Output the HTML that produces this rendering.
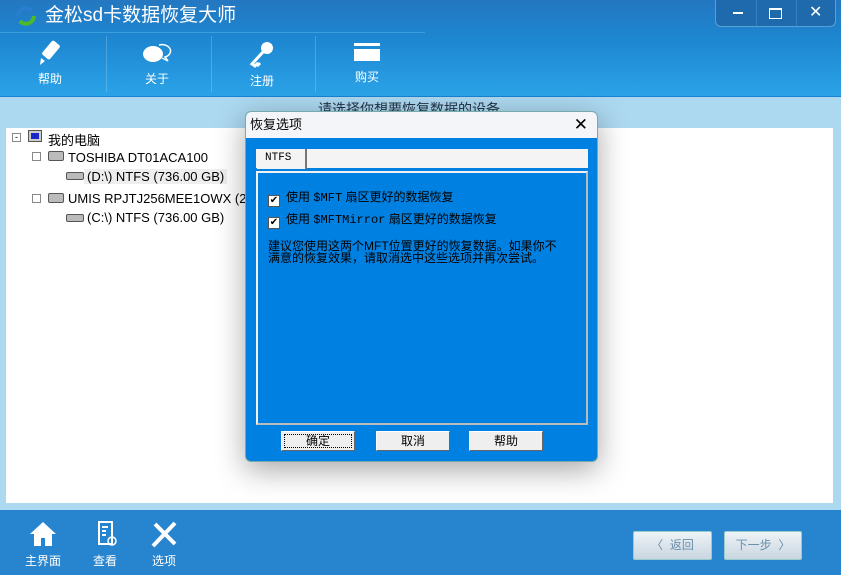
<!DOCTYPE html>
<html><head><meta charset="utf-8"><style>
*{margin:0;padding:0;box-sizing:border-box}
body{width:841px;height:575px;overflow:hidden;position:relative;background:#acd8f0;font-family:"Liberation Sans","Noto Sans CJK SC",sans-serif}
.hdr{position:absolute;left:0;top:0;width:841px;height:97px;background:linear-gradient(#2477c0,#1d86d0 40%,#2ba3e8);border-bottom:1px solid #1a82d0}
.title{position:absolute;left:45px;top:3px;color:#fff;font-size:19px;line-height:26px}
.sep{position:absolute;left:0;top:32px;width:425px;height:1px;background:#3a9ee0}
.wc{position:absolute;left:715px;top:0;width:121px;height:27px;background:#1f6aad;border:1px solid #5aa0d8;border-top:none;border-radius:0 0 6px 6px}
.tb{position:absolute;top:40px;width:60px;text-align:center;color:#fff;font-size:12px}
.tb svg{display:block;margin:0 auto 4px}
.vs{position:absolute;top:36px;width:1px;height:56px;background:rgba(255,255,255,.2)}
.panel{position:absolute;left:6px;top:128px;width:827px;height:375px;background:#fff}
.tree{position:absolute;font-size:13px;color:#000}
.bot{position:absolute;left:0;top:510px;width:841px;height:65px;background:#2784cf}
.bi{position:absolute;top:10px;width:50px;text-align:center;color:#fff;font-size:12px;white-space:nowrap}
.bi svg{display:block;margin:0 auto 4px}
.nb{position:absolute;top:531px;height:29px;border:1px solid #9cc;background:linear-gradient(#eef3f7,#c9d6e0);border-radius:2px;color:#6a8ea8;font-size:12px;line-height:27px;text-align:center}
.dlg{position:absolute;left:245px;top:111px;width:353px;height:351px;background:#0080e0;border:1px solid #7aa;border-radius:6px;box-shadow:0 8px 30px rgba(0,0,0,.35);overflow:hidden}
.dt{height:26px;background:#f3f5f8;font-size:13px;line-height:26px;padding-left:4px}
.btn{position:absolute;top:319px;height:20px;width:74px;background:#efefef;border:1px solid #fff;border-right-color:#666;border-bottom-color:#666;font-size:12px;text-align:center;line-height:18px}
.cb{display:inline-block;width:12px;height:12px;background:#fff;border:1px solid #555;vertical-align:-2px;margin-right:6px;font-size:10px;line-height:10px;text-align:center}
.mono{font-family:"Liberation Mono","Noto Sans CJK SC",monospace}
</style></head><body>
<div class="hdr">
<svg style="position:absolute;left:14px;top:5px" width="24" height="22" viewBox="0 0 24 22"><path d="M4 11a8 8 0 0 1 14-5" stroke="#2a7ed0" stroke-width="4" fill="none"/><path d="M20 11a8 8 0 0 1-14 5" stroke="#4cb82a" stroke-width="4" fill="none"/></svg>
<div class="title">金松sd卡数据恢复大师</div>
<div class="sep"></div>
<div class="wc"><div style="position:absolute;left:17px;top:12px;width:10px;height:2px;background:#fff"></div><div style="position:absolute;left:53px;top:8px;width:13px;height:11px;border:1px solid #fff;border-top-width:2px"></div><div style="position:absolute;left:93px;top:2px;color:#fff;font-size:16px">✕</div><div style="position:absolute;left:40px;top:0;width:1px;height:26px;background:#3580c0"></div><div style="position:absolute;left:80px;top:0;width:1px;height:26px;background:#3580c0"></div></div>
<div class="tb" style="left:20px"><svg width="30" height="26" viewBox="0 0 30 26"><rect x="11" y="1" width="10" height="18" rx="2" fill="#fff" transform="rotate(40 16 10)"/><path d="M6 18l4 3-5 4z" fill="#fff"/></svg>帮助</div>
<div class="vs" style="left:106px"></div>
<div class="tb" style="left:127px"><svg width="32" height="26" viewBox="0 0 32 26"><ellipse cx="12" cy="14" rx="10" ry="8" fill="#fff"/><path d="M18 5a8 6 0 1 1 6 12l3 4-6-3" stroke="#fff" stroke-width="1.5" fill="none"/></svg>关于</div>
<div class="vs" style="left:211px"></div>
<div class="tb" style="left:232px"><svg width="30" height="28" viewBox="0 0 30 28"><circle cx="20" cy="8" r="6" fill="#fff"/><path d="M16 12L5 24l3 2 2-2 1 1 2-2" stroke="#fff" stroke-width="3" fill="none"/></svg>注册</div>
<div class="vs" style="left:315px"></div>
<div class="tb" style="left:337px"><svg width="28" height="24" viewBox="0 0 28 24"><rect x="1" y="3" width="26" height="3" fill="#fff"/><rect x="1" y="9" width="26" height="12" fill="#fff"/></svg>购买</div>
</div>
<div style="position:absolute;left:318px;top:99px;font-size:14px;color:#234">请选择你想要恢复数据的设备</div>
<div class="panel"></div>
<div class="tree" style="left:12px;top:130px">
<div style="position:absolute;left:0;top:3px;width:9px;height:9px;border:1px solid #888;font-size:9px;line-height:6px;text-align:center">-</div>
<div style="position:absolute;left:16px;top:0;width:14px;height:12px;background:#ccc;border:1px solid #555"><div style="margin:2px;height:6px;background:#1428c8"></div></div>
<div style="position:absolute;left:36px;top:0;white-space:nowrap">我的电脑</div>
<div style="position:absolute;left:20px;top:22px;width:9px;height:9px;border:1px solid #888"></div>
<div style="position:absolute;left:36px;top:21px;width:16px;height:10px;background:#bbb;border:1px solid #555;border-radius:2px"></div>
<div style="position:absolute;left:56px;top:20px;white-space:nowrap">TOSHIBA DT01ACA100</div>
<div style="position:absolute;left:54px;top:42px;width:18px;height:8px;background:#bbb;border:1px solid #555;border-radius:2px"></div>
<div style="position:absolute;left:72px;top:39px;background:#eee;white-space:nowrap;padding:0 3px">(D:\) NTFS (736.00 GB)</div>
<div style="position:absolute;left:20px;top:64px;width:9px;height:9px;border:1px solid #888"></div>
<div style="position:absolute;left:36px;top:63px;width:16px;height:10px;background:#bbb;border:1px solid #555;border-radius:2px"></div>
<div style="position:absolute;left:56px;top:61px;white-space:nowrap">UMIS RPJTJ256MEE1OWX (238</div>
<div style="position:absolute;left:54px;top:84px;width:18px;height:8px;background:#bbb;border:1px solid #555;border-radius:2px"></div>
<div style="position:absolute;left:75px;top:80px;white-space:nowrap">(C:\) NTFS (736.00 GB)</div>
</div>
<div class="bot">
<div class="bi" style="left:18px"><svg width="30" height="28" viewBox="0 0 30 28"><path d="M15 2L2 14h4v12h7v-8h4v8h7V14h4z" fill="#fff"/></svg>主界面</div>
<div class="bi" style="left:80px"><svg width="30" height="28" viewBox="0 0 30 28"><rect x="9" y="2" width="13" height="22" fill="none" stroke="#fff" stroke-width="2"/><path d="M12 7h6M12 11h4M12 15h4" stroke="#fff" stroke-width="2"/><circle cx="22" cy="21" r="4" fill="none" stroke="#fff" stroke-width="1.5"/></svg>查看</div>
<div class="bi" style="left:139px"><svg width="30" height="28" viewBox="0 0 30 28"><path d="M4 26L26 3M6 4l20 20" stroke="#fff" stroke-width="4"/></svg>选项</div>
</div>
<div class="nb" style="left:633px;width:79px">〈 &nbsp;返回</div>
<div class="nb" style="left:724px;width:78px">下一步 &nbsp;〉</div>
<div class="dlg">
<div class="dt">恢复选项<span style="position:absolute;right:9px;top:0;font-size:17px">✕</span></div>
<div style="position:absolute;left:10px;top:37px;width:332px;height:19px;background:#f4f4f4"></div>
<div class="mono" style="position:absolute;left:11px;top:37px;width:50px;height:20px;background:#f4f4f4;border-right:2px solid #777;font-size:11px;line-height:19px;padding-left:8px">NTFS</div>
<div style="position:absolute;left:10px;top:59px;width:332px;height:254px;border:2px solid #f2f2f2;border-right-color:#bbb;border-bottom-color:#bbb"></div>
<div style="position:absolute;left:22px;top:76px;font-size:12px;color:#000;white-space:nowrap"><span class="cb">✔</span>使用 <span class="mono">$MFT</span> 扇区更好的数据恢复</div>
<div style="position:absolute;left:22px;top:98px;font-size:12px;color:#000;white-space:nowrap"><span class="cb">✔</span>使用 <span class="mono">$MFTMirror</span> 扇区更好的数据恢复</div>
<div style="position:absolute;left:22px;top:128px;width:300px;font-size:12px;line-height:12px;color:#000">建议您使用这两个MFT位置更好的恢复数据。如果你不满意的恢复效果，请取消选中这些选项并再次尝试。</div>
<div class="btn" style="left:35px;outline:1px dotted #000;outline-offset:-4px">确定</div>
<div class="btn" style="left:130px">取消</div>
<div class="btn" style="left:223px">帮助</div>
</div>
</body></html>
